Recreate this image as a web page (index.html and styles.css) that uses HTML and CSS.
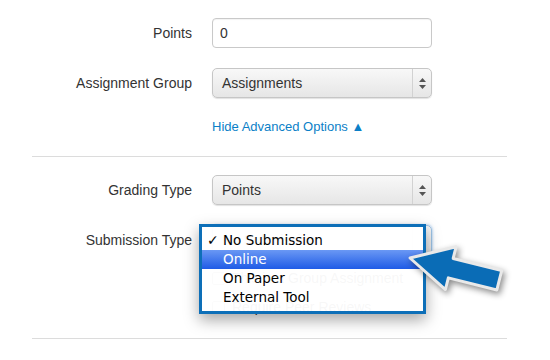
FILE: index.html
```html
<!DOCTYPE html>
<html lang="en">
<head>
    <meta charset="UTF-8">
    <meta name="viewport" content="width=device-width, initial-scale=1.0">
    <title>Assignment Options</title>
    <link rel="stylesheet" href="styles.css">
</head>
<body>
    <div class="form">
        <div class="row">
            <label for="points">Points</label>
            <input type="text" id="points" class="field" value="0">
        </div>

        <div class="row">
            <label>Assignment Group</label>
            <div class="select">
                <span>Assignments</span>
                <span class="spinner">
                    <svg width="7" height="11" viewBox="0 0 7 11"><path d="M3.5 0 L7 4 L0 4 Z M0 7 L7 7 L3.5 11 Z" fill="#555"/></svg>
                </span>
            </div>
        </div>

        <div class="row row-link">
            <span></span>
            <a href="#" class="toggle">Hide Advanced Options &#9650;</a>
        </div>

        <hr class="divider">

        <div class="row row-grading">
            <label>Grading Type</label>
            <div class="select">
                <span>Points</span>
                <span class="spinner">
                    <svg width="7" height="11" viewBox="0 0 7 11"><path d="M3.5 0 L7 4 L0 4 Z M0 7 L7 7 L3.5 11 Z" fill="#555"/></svg>
                </span>
            </div>
        </div>

        <div class="row">
            <label>Submission Type</label>
            <div class="select select-open">
                <span>No Submission</span>
                <span class="spinner"></span>

                <!-- open native menu -->
                <ul class="menu">
                    <li><span class="check">&#10003;</span>No Submission</li>
                    <li class="active">Online</li>
                    <li>On Paper</li>
                    <li>External Tool</li>
                </ul>
            </div>
        </div>

        <div class="row row-check">
            <span></span>
            <label class="check-label"><span class="box"></span>This is a Group Assignment</label>
        </div>

        <div class="row row-check last">
            <span></span>
            <label class="check-label"><span class="box"></span>Require Peer Reviews</label>
        </div>

        <hr class="divider">

        <svg class="pointer" width="120" height="75" viewBox="0 0 120 75">
            <g transform="translate(15,23) rotate(14)">
                <polygon points="0,0 42,-22 42,-10 92,-10 92,10 42,10 42,22" fill="#0a6cb6" stroke="#e9e9e9" stroke-width="3" stroke-linejoin="round"/>
            </g>
        </svg>
    </div>
</body>
</html>
```

FILE: styles.css
```css
* {
    margin: 0;
    padding: 0;
    box-sizing: border-box;
}

body {
    font-family: 'Liberation Sans', Arial, sans-serif;
    font-size: 14px;
    color: #333;
    background: #fff;
}

.form {
    position: relative;
    width: 550px;
    height: 360px;
    padding-top: 18px;
    overflow: hidden;
}

/* Rows: label column + control column */
.row {
    display: grid;
    grid-template-columns: 192px 220px;
    column-gap: 20px;
    align-items: center;
    margin-bottom: 20px;
}

.row > label {
    text-align: right;
}

.field {
    width: 220px;
    height: 30px;
    padding: 0 7px;
    border: 1px solid #c9c9c9;
    border-radius: 4px;
    font-family: inherit;
    font-size: 14px;
    color: #333;
    box-shadow: inset 0 1px 1px rgba(0, 0, 0, 0.05);
}

.select {
    position: relative;
    display: flex;
    align-items: center;
    justify-content: space-between;
    width: 220px;
    height: 30px;
    padding-left: 9px;
    border: 1px solid #c6c6c6;
    border-radius: 5px;
    background: linear-gradient(#f8f8f8, #e6e6e6);
    box-shadow: 0 1px 1px rgba(0, 0, 0, 0.12);
}

.spinner {
    display: flex;
    align-items: center;
    justify-content: center;
    width: 19px;
    height: 100%;
    border-left: 1px solid #d2d2d2;
}

.select-open {
    border-color: #9cc3e6;
    box-shadow: 0 0 3px rgba(60, 140, 220, 0.6);
}

.row-link {
    margin-bottom: 20px;
    line-height: 18px;
}

.toggle {
    font-size: 13px;
    color: #0b7fc7;
    text-decoration: none;
}

.divider {
    width: 475px;
    margin-left: 32px;
    border: none;
    border-top: 1px solid #dcdcdc;
}

.row-grading {
    margin-top: 18px;
}

.row-check {
    line-height: 18px;
    margin-top: -6px;
    margin-bottom: 17px;
}

.row-check.last {
    margin-bottom: 22px;
}

.check-label {
    display: flex;
    align-items: center;
    color: #333;
}

.box {
    width: 13px;
    height: 13px;
    margin-right: 7px;
    border: 1px solid #999;
    border-radius: 2px;
    background: #fff;
}

/* Open menu lying over the form */
.menu {
    position: absolute;
    left: -14px;
    top: -2px;
    width: 227px;
    padding: 4px 0;
    list-style: none;
    border: 3px solid #0d6fb8;
    background: rgba(255, 255, 255, 0.96);
    box-shadow: 0 6px 14px rgba(0, 0, 0, 0.35);
    font-family: 'DejaVu Sans', Verdana, sans-serif;
    font-size: 13.5px;
    color: #000;
    z-index: 2;
}

.menu li {
    position: relative;
    height: 19px;
    line-height: 19px;
    padding-left: 21px;
}

.menu .check {
    position: absolute;
    left: 5px;
    font-size: 14px;
    font-weight: bold;
}

.menu .active {
    background: linear-gradient(#6a98f4, #1f5be6);
    color: #fff;
}

.pointer {
    position: absolute;
    left: 395px;
    top: 235px;
    z-index: 3;
    filter: drop-shadow(2px 3px 3px rgba(0, 0, 0, 0.45));
}
```
